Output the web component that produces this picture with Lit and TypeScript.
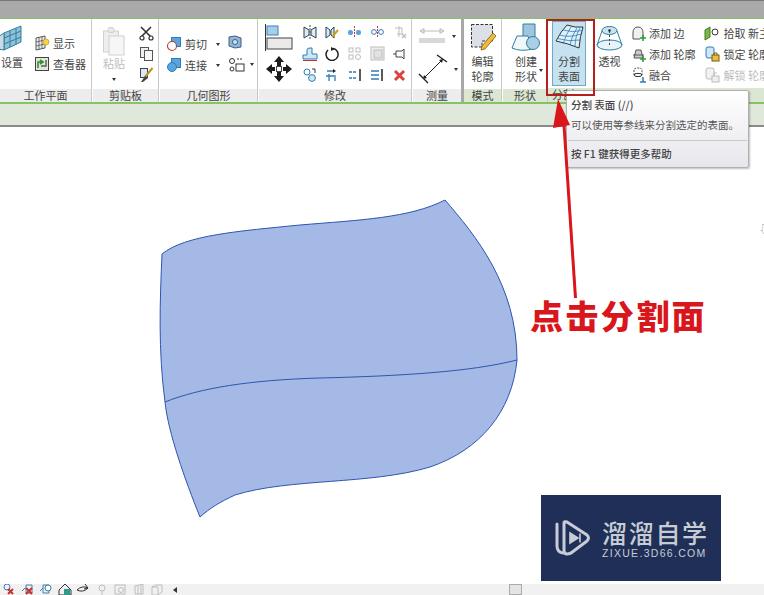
import { LitElement, html, css, svg } from "lit";
import { customElement } from "lit/decorators.js";

const ic = (w: number, h: number, body: unknown) =>
  html`<svg width=${w} height=${h} viewBox="0 0 ${w} ${h}" fill="none">${body}</svg>`;

const B = "#3f7fb5", GR = "#bdbdbd";

const arrowDrop = html`<span class="drop"></span>`;

const icons: Record<string, unknown> = {
  plane: ic(30, 28, svg`<path d="M7 8 L24 1 V17 L7 25Z" fill="#8fc0d8" stroke="#2f7f9f"/><path d="M13 6V22M19 3.5V19.5M7 13L24 6M7 19L24 12" stroke="#2f7f9f"/><path d="M7 8 L1 12 V24 L7 25Z" fill="#c7dce6" stroke="#3b7c95"/>`),
  show: ic(16, 16, svg`<path d="M2 3 L11 1 V13 L2 15Z" fill="#eee" stroke="#555"/><path d="M5 2.5V14M8 2V13.5M2 7L11 5M2 11L11 9" stroke="#555" stroke-width=".8"/><circle cx="12" cy="7" r="3" fill="#f4d34a" stroke="#c9a116" stroke-width=".7"/>`),
  viewer: ic(16, 16, svg`<rect x="1.5" y="1.5" width="13" height="13" fill="#dfe9d6" stroke="#444"/><path d="M4 12 V6 H9 M6 4 L9 6 L6 8" stroke="#3a8a3a" stroke-width="1.6"/><path d="M12 4 V10 H7" stroke="#5a5a5a" stroke-width="1.4"/>`),
  paste: ic(24, 30, svg`<rect x="1.5" y="5" width="15" height="21" fill="#eee" stroke="#d0d0d0"/><rect x="7" y="10" width="15" height="19" fill="#f6f6f6" stroke="#d0d0d0"/><rect x="6" y="1.5" width="6" height="5" rx="2" fill="#e8e8e8" stroke="#d0d0d0"/>`),
  cut: ic(15, 15, svg`<path d="M2 1 L12 11 M12 1 L2 11" stroke="#333" stroke-width="1.6"/><circle cx="3" cy="12" r="2" fill="#fff" stroke="#333" stroke-width="1.2"/><circle cx="12" cy="12" r="2" fill="#fff" stroke="#333" stroke-width="1.2"/>`),
  copy: ic(15, 16, svg`<rect x="1.5" y="1.5" width="8" height="10" fill="#eee" stroke="#555"/><rect x="5.5" y="4.5" width="8" height="10" fill="#f6f6f6" stroke="#555"/>`),
  brush: ic(15, 16, svg`<rect x="1.5" y="1.5" width="7" height="9" fill="#dfe8f0" stroke="#345"/><path d="M13.5 1 L6 10" stroke="#b8922a" stroke-width="2"/><path d="M6 9 L9 11 L4 15 H2Z" fill="#444"/>`),
  cutg: ic(16, 16, svg`<rect x="5.5" y="1.5" width="9" height="9" fill="#5aa5dc" stroke="#2f7cb8"/><circle cx="6" cy="10" r="4.5" fill="#fff" stroke="#c0392b" stroke-width="1.1"/>`),
  join: ic(16, 16, svg`<rect x="5.5" y="1.5" width="9" height="9" fill="#5aa5dc" stroke="#2f7cb8"/><circle cx="6" cy="10" r="4.5" fill="#5aa5dc" stroke="#2f7cb8"/>`),
  box: ic(14, 14, svg`<path d="M1 2 L7 1 L13 3 V12 L7 13 L1 11Z" fill="#8fb6d6" stroke="#3f5f7f"/><circle cx="7" cy="7" r="2.5" fill="#d5e6f2" stroke="#3f5f7f"/>`),
  geo: ic(18, 15, svg`<circle cx="4" cy="4" r="2.5" stroke="#333"/><circle cx="4" cy="12" r="2" stroke="#333"/><rect x="8" y="7" width="8" height="7" fill="#fff" stroke="#333"/><path d="M9 2 H14" stroke="#333" stroke-dasharray="2 1"/>`),
  align: ic(28, 27, svg`<path d="M0.5 0 V27" stroke="#333"/><rect x="2" y="2" width="11" height="9" fill="#a5cfe8" stroke="#3f7fb5"/><rect x="2" y="14" width="25" height="11" fill="#eaeaea" stroke="#444"/>`),
  move: ic(28, 28, svg`<path d="M14 1 L19 7 H16 V11 H12 V7 H9Z M14 27 L19 21 H16 V17 H12 V21 H9Z M1 14 L7 9 V12 H10 V16 H7 V19Z M27 14 L21 9 V12 H18 V16 H21 V19Z" fill="#1c1c1c"/><rect x="11.5" y="11.5" width="5" height="5" fill="#fff" stroke="#444"/>`),
  mirror1: ic(14, 14, svg`<path d="M1 2 L6 5 V10 L1 13Z" stroke="#245" fill="#dfeaf2"/><path d="M13 2 L8 5 V10 L13 13Z" stroke="#245" fill="#dfeaf2"/><path d="M7 0V14" stroke="#444" stroke-dasharray="2 1"/>`),
  mirror2: ic(14, 14, svg`<path d="M1 2 L5 5 V10 L1 13Z" stroke="#245" fill="#dfeaf2"/><path d="M9 2 L6 5 V10 L9 13Z" stroke="#245" fill="#dfeaf2"/><path d="M13 5 L7 12" stroke="#c9a116" stroke-width="2"/>`),
  splitA: ic(15, 12, svg`<rect x="1" y="4" width="5" height="5" rx="2" fill="#5aa5dc"/><rect x="9" y="4" width="5" height="5" rx="2" fill="#5aa5dc"/><path d="M7.5 0V12" stroke="#c0392b" stroke-dasharray="2 1"/>`),
  splitB: ic(15, 12, svg`<circle cx="4" cy="6" r="2.4" stroke="#2f7cb8" fill="#fff"/><circle cx="11" cy="6" r="2.4" stroke="#2f7cb8" fill="#fff"/><path d="M7.5 0V12" stroke="#c0392b" stroke-dasharray="2 1"/>`),
  unpin: ic(14, 14, svg`<path d="M2 3 H9 V9 H4M6 1 V12" stroke=${GR}/><path d="M9 9 L13 13 M13 9 L9 13" stroke=${GR} stroke-width="1.4"/>`),
  offset: ic(16, 14, svg`<path d="M1 12 V8 H5 V3 Q5 1 8 1 H10 V7 H15 V12Z" fill="#cfe6f5" stroke="#2f7cb8"/><path d="M1 13.5H15" stroke="#c0392b"/>`),
  rotate: ic(14, 14, svg`<path d="M8 1.5 A6 6 0 1 1 3 3" stroke="#222" stroke-width="1.5"/><path d="M6 0 L10 2 L6 4Z" fill="#222"/>`),
  arr1: ic(14, 14, svg`<rect x="1" y="1" width="4" height="4" stroke=${GR}/><rect x="8" y="1" width="4" height="4" stroke=${GR}/><rect x="1" y="8" width="4" height="4" stroke=${GR}/><circle cx="10" cy="10" r="2.5" stroke=${GR}/>`),
  scale: ic(15, 15, svg`<rect x="1" y="1" width="13" height="13" fill="#eee" stroke=${GR}/><rect x="4" y="4" width="8" height="8" fill="#e2e2e2" stroke=${GR}/>`),
  pin: ic(14, 12, svg`<path d="M3 3 H9 L11 1 V11 L9 9 H3Z M3 6 H0" stroke="#444" fill="#fff"/>`),
  link: ic(14, 14, svg`<circle cx="4" cy="4" r="3" stroke="#2f7cb8" fill="#fff"/><circle cx="9" cy="10" r="3.4" stroke="#2f7cb8" fill="#cfe6f5"/><path d="M9 1 H12 V5" stroke="#333"/>`),
  trim1: ic(14, 14, svg`<path d="M2 3 H8 M1 8 H9 M4 6 V13 M10 7 V13" stroke="#2f7cb8" stroke-width="1.3"/><path d="M8 1 L11 3 L8 5Z" fill="#222"/>`),
  trim2: ic(14, 14, svg`<path d="M1 4 H9 M1 10 H9" stroke="#2f7cb8" stroke-width="1.6" stroke-dasharray="3 1"/><path d="M12 1 V13" stroke="#333" stroke-width="1.6"/>`),
  trim3: ic(14, 14, svg`<path d="M1 3 H9 M1 7 H9 M1 11 H9" stroke="#2f7cb8" stroke-width="1.6"/><path d="M12 1 V13" stroke="#333" stroke-width="1.6"/>`),
  del: ic(13, 13, svg`<path d="M2 2 L11 11 M11 2 L2 11" stroke="#d9453d" stroke-width="3"/>`),
  dim1: ic(28, 18, svg`<path d="M2 4 H26 M2 4 L6 1.5 V6.5Z M26 4 L22 1.5 V6.5Z" stroke=${GR}/><rect x="1" y="11" width="26" height="5" fill="#d8d8d8"/>`),
  dim2: ic(30, 30, svg`<path d="M5 25 L25 5" stroke="#222"/><path d="M19 1 L29 8 M1 20 L10 29" stroke="#222" stroke-width="1.4"/><path d="M25 5 L21 6 L24 9Z M5 25 L9 24 L6 21Z" fill="#222"/>`),
  edit: ic(26, 28, svg`<path d="M1.5 1.5 H22.5 V18 H12 V24 H1.5Z" fill="#dde0e6" stroke="#333" stroke-dasharray="3 1.5"/><path d="M23 10 L12 23 L11 27 L15 26 L26 13Z" fill="#eebc3c" stroke="#7b5a0a" stroke-width=".8"/>`),
  shape: ic(30, 28, svg`<path d="M12 1 H24 V16 H12Z" fill="#9fc6de" stroke="#2f7f9f"/><path d="M6 13 H17 L21 26 Q10 29 1 25Z" fill="#f1f6f9" stroke="#2f7f9f"/><circle cx="22" cy="20" r="6.5" fill="#a9cfe4" stroke="#2f7f9f"/>`),
  divide: ic(29, 26, svg`<path d="M1 17 Q6 7 12 1 Q20 4 28 3 Q25 12 24 24 Q12 19 1 17Z" fill="#dff1fb" stroke="#333"/><path d="M4.5 11 Q15 14 26 10 M8 6 Q18 9 27 6.5 M2.5 14.5 Q14 18 25 16 M8 20 Q11 10 16 3 M15 21 Q17 11 22 4 M20 23 Q20 12 25 4" stroke="#2f7cb8" stroke-width=".8"/>`),
  xray: ic(27, 26, svg`<ellipse cx="13.5" cy="5.5" rx="7.5" ry="4" fill="#c7e2f2" stroke="#2f7f9f"/><path d="M6 6 L1 20 M21 6 L26 20" stroke="#2f7f9f"/><ellipse cx="13.5" cy="20" rx="12.5" ry="5" fill="#c7e2f2" fill-opacity=".4" stroke="#2f7f9f"/><path d="M13.5 6 V22" stroke="#444" stroke-dasharray="2 2"/><circle cx="13.5" cy="5.5" r="1.2" fill="#222"/>`),
  addEdge: ic(15, 15, svg`<path d="M2 13 V7 Q2 1 7 1 Q12 1 12 7 V13" stroke="#555" fill="#eef2f5"/><path d="M2 13 H9" stroke="#555"/><path d="M12 9 V15 M9 12 H15" stroke="#2f9a3c" stroke-width="1.6"/>`),
  addProf: ic(15, 15, svg`<path d="M3 11 L5 3 H10 L12 11Z" fill="#c9ced4" stroke="#555"/><path d="M2 8 H13" stroke="#555"/><path d="M12 9 V15 M9 12 H15" stroke="#2f9a3c" stroke-width="1.6"/>`),
  blend: ic(15, 16, svg`<path d="M3 8 V3 Q3 1 7 1 Q11 1 11 3 V8" stroke="#555" stroke-dasharray="2 1"/><ellipse cx="7" cy="8" rx="4" ry="1.6" stroke="#333"/><path d="M9 15 H15 M12 15 V10" stroke="#2f7cb8" stroke-width="1.5"/>`),
  pick: ic(16, 15, svg`<path d="M1 4 L6 1 V11 L1 14Z" fill="#7ab648" stroke="#3f7a1f"/><circle cx="11" cy="6" r="3" stroke="#333"/>`),
  lock: ic(16, 16, svg`<rect x="2" y="1" width="8" height="11" rx="2" fill="#cfe6f5" stroke="#2f7cb8"/><rect x="8" y="9" width="7" height="6" fill="#eebc3c" stroke="#7b5a0a"/><path d="M10 9 V7 H13 V9" stroke="#7b5a0a"/>`),
  unlock: ic(16, 16, svg`<rect x="2" y="1" width="8" height="11" rx="2" fill="#f2f2f2" stroke=${GR}/><rect x="8" y="9" width="7" height="6" fill="#eee" stroke=${GR}/><path d="M10 9 V6 H13" stroke=${GR}/>`),
};

const status = [
  svg`<circle cx="5" cy="4" r="3" stroke=${B}/><path d="M6 6 L11 11 M11 6 L6 11" stroke="#c8322b" stroke-width="2"/>`,
  svg`<path d="M1 8 L4 5 M5 2 H11 V10 H5Z" stroke=${B}/><path d="M5 5 L11 11 M11 5 L5 11" stroke="#c8322b" stroke-width="2"/>`,
  svg`<path d="M1 8 L4 5 M4 2 H10 V10 H4Z" stroke=${B}/><circle cx="9" cy="5" r="3" fill="#fff" stroke="#2f7f9f"/>`,
  svg`<path d="M1 7 L7 1 L13 7 V12 H1Z" stroke="#333"/><rect x="6" y="6" width="6" height="6" fill="#2f9a8a"/>`,
  svg`<path d="M1 7 Q6 2 12 5 Q7 10 1 7Z M9 1 L12 5 L8 6" stroke="#333"/>`,
  svg`<circle cx="7" cy="5" r="3" stroke=${GR}/><path d="M7 8 V12" stroke=${GR}/>`,
  svg`<rect x="2" y="2" width="10" height="9" stroke=${GR}/><circle cx="8" cy="7" r="2.5" stroke=${GR}/>`,
  svg`<path d="M3 3 L11 1 V11 H3Z M6 3 V11 M9 2 V11" stroke=${GR}/>`,
  svg`<path d="M2 4 L6 2 H12 V9 L8 12 H2Z M2 4 H8 V12" stroke=${GR}/>`,
];

@customElement("app-root")
export class AppRoot extends LitElement {
  static styles = css`
    :host { display: block; width: 764px; height: 595px; overflow: hidden; position: relative; background: #fff;
      font-family: "Noto Sans CJK SC", "Liberation Sans", sans-serif; font-size: 10px; color: #444; }
    svg { display: block; flex: none; }
    .app { display: flex; flex-direction: column; height: 595px; }
    .title { height: 17px; flex: none; background: #a9a9a9; border-top: 1px solid #777; border-bottom: 1px solid #86c463; }
    .ribbon { height: 83px; flex: none; display: flex; background: #fff; overflow: hidden; }
    .panel { display: flex; flex-direction: column; flex: none; border-right: 1px solid #c9c9c9; margin-right: 1px; }
    .body { height: 69px; display: flex; align-items: flex-start; overflow: hidden; }
    .label { height: 14px; line-height: 13px; text-align: center; background: #ededed; font-size: 11px; color: #444; white-space: nowrap; }
    .mode .label, .shape .label, .last .label { background: #dbe6d3; }
    .last .label { text-align: left; padding-left: 4px; }
    .p1 { width: 91px; } .p2 { width: 65px; } .p3 { width: 97px; } .p4 { width: 152px; } .p5 { width: 48px; margin-right: 0; border-right: 3px solid #a8a8a8; }
    .mode { width: 37px; } .shape { width: 44px; margin-right: 0; } .last { flex: 1; border-right: none; margin-right: 0; }
    .big { display: flex; flex-direction: column; align-items: center; line-height: 15px; font-size: 11px; flex: none; }
    .col { display: flex; flex-direction: column; flex: none; }
    .row { display: flex; align-items: center; gap: 3px; white-space: nowrap; font-size: 11px; }
    .drop { width: 0; height: 0; border: 2px solid transparent; border-top: 3px solid #333; border-bottom: 0; display: block; flex: none; }
    .muted { color: #bdbdbd; }
    .p1 .body { padding: 6px 0 0 0; gap: 7px; margin-left: -3px; }
    .p1 .big svg { margin-bottom: 2px; }
    .p1 .col { gap: 5px; margin-top: 10px; }
    .p2 .body { padding: 7px 0 0 9px; gap: 13px; }
    .p2 .big .drop { margin-top: 7px; }
    .p2 .col { gap: 5px; }
    .p3 .body { padding: 17px 0 0 6px; gap: 8px; }
    .p3 .col { gap: 5px; }
    .p3 .col.b { margin-top: -1px; gap: 8px; }
    .p3 .row { gap: 3px; width: 54px; }
    .p3 .row .drop { margin-left: 6px; }
    .p3 .b .row { width: auto; gap: 4px; }
    .p3 .b .row .drop { margin-left: 0; }
    .p4 .body { padding: 5px 0 0 6px; gap: 9px; }
    .p4 .col { gap: 4px; flex: none; }
    .grid { display: grid; grid-template-columns: repeat(5, 15px); column-gap: 7.5px; row-gap: 7px; padding-top: 1px; justify-items: center; align-items: center; }
    .p5 .body { padding: 8px 0 0 5px; }
    .p5 .col { gap: 9px; }
    .p5 .row { gap: 6px; }
    .mode .body { justify-content: center; padding-top: 4px; }
    .shape .body { justify-content: center; padding-top: 4px; gap: 0; position: relative; }
    .shape .big svg, .mode .big svg { margin-bottom: 3px; }
    .shape .drop { position: absolute; right: 4px; top: 50px; }
    .shape .big { margin-left: 2px; }
    .last .body { gap: 8px; }
    .divide { margin: 2px 0 0 4px; width: 34px; height: 65px; box-sizing: border-box; background: #c6e1f0; border: 1px solid #6fa9c6; padding-top: 2px; }
    .divide svg { margin-bottom: 4px; }
    .xray { margin-left: 2px; padding-top: 6px; }
    .xray svg { margin-bottom: 3px; }
    .tri { padding-top: 6px; gap: 5px; }
    .tri.two { margin-left: 1px; }
    .band { height: 25px; flex: none; box-sizing: border-box; background: #dfe8da; border-top: 2px solid #86c463; border-bottom: 2px solid #8a8a8a; }
    .canvas { flex: 1; position: relative; background: #fff; overflow: hidden; }
    .canvas > svg { position: absolute; left: 0; top: 0; }
    .callout { position: absolute; left: 530px; top: 168px; font-size: 33px; line-height: 40px; font-weight: 900; color: #d9161b; letter-spacing: 2.4px; white-space: nowrap; }
    .logo { position: absolute; left: 541px; top: 368px; width: 180px; height: 86px; background: #1f2f58; color: #c8ccd4; display: flex; align-items: center; gap: 11px; padding: 2px 0 0 14px; box-sizing: border-box; }
    .brand { font-size: 25px; line-height: 28px; font-weight: 500; letter-spacing: 1.7px; white-space: nowrap; }
    .site { font-family: "Liberation Sans", sans-serif; font-size: 10.5px; line-height: 13px; letter-spacing: 1.3px; margin-top: 1px; white-space: nowrap; }
    .status { height: 11px; flex: none; background: #f1f1f1; display: flex; align-items: center; position: relative; overflow: hidden; padding-left: 2px; gap: 4.5px; }
    .thumb { position: absolute; left: 509px; top: 0; width: 13px; height: 11px; background: #e4e4e4; border: 1px solid #aaa; box-sizing: border-box; }
    .left { width: 0; height: 0; border: 3px solid transparent; border-right: 4px solid #333; margin-left: 1px; }
    .tip { position: absolute; left: 566px; top: 90px; width: 183px; height: 78px; box-sizing: border-box; background: linear-gradient(#fff, #e6e6ec); border: 1px solid #b0b0b0; border-radius: 2px; box-shadow: 1px 1px 2px rgba(0,0,0,.25); padding: 6px 4px 0 4px; color: #444; font-size: 10.5px; }
    .tip b { display: block; line-height: 16px; font-weight: 500; }
    .tip p { margin: 4px 0 0; line-height: 15px; color: #555; white-space: nowrap; }
    .tip hr { border: none; border-top: 1px solid #c8c8c8; margin: 8px -3px 6px; }
    .tip div { line-height: 14px; font-weight: 500; }
    .overlay { position: absolute; left: 0; top: 0; pointer-events: none; }
    .mark { position: absolute; left: 759px; top: 96px; font-size: 10px; color: #999; line-height: 12px; }
  `;

  render() {
    return html`
      <div class="app">
        <div class="title"></div>
        <div class="ribbon">
          <div class="panel p1">
            <div class="body">
              <div class="big">${icons.plane}<span>设置</span></div>
              <div class="col">
                <div class="row">${icons.show}<span>显示</span></div>
                <div class="row">${icons.viewer}<span>查看器</span></div>
              </div>
            </div>
            <div class="label">工作平面</div>
          </div>
          <div class="panel p2">
            <div class="body">
              <div class="big muted">${icons.paste}<span>粘贴</span>${arrowDrop}</div>
              <div class="col">${icons.cut}${icons.copy}${icons.brush}</div>
            </div>
            <div class="label">剪贴板</div>
          </div>
          <div class="panel p3">
            <div class="body">
              <div class="col">
                <div class="row">${icons.cutg}<span>剪切</span>${arrowDrop}</div>
                <div class="row">${icons.join}<span>连接</span>${arrowDrop}</div>
              </div>
              <div class="col b">
                <div class="row">${icons.box}</div>
                <div class="row">${icons.geo}${arrowDrop}</div>
              </div>
            </div>
            <div class="label">几何图形</div>
          </div>
          <div class="panel p4">
            <div class="body">
              <div class="col">${icons.align}${icons.move}</div>
              <div class="grid">
                ${["mirror1","mirror2","splitA","splitB","unpin","offset","rotate","arr1","scale","pin","link","trim1","trim2","trim3","del"].map((k) => icons[k])}
              </div>
            </div>
            <div class="label">修改</div>
          </div>
          <div class="panel p5">
            <div class="body">
              <div class="col">
                <div class="row">${icons.dim1}${arrowDrop}</div>
                <div class="row">${icons.dim2}${arrowDrop}</div>
              </div>
            </div>
            <div class="label">测量</div>
          </div>
          <div class="panel mode">
            <div class="body"><div class="big">${icons.edit}<span>编辑</span><span>轮廓</span></div></div>
            <div class="label">模式</div>
          </div>
          <div class="panel shape">
            <div class="body"><div class="big">${icons.shape}<span>创建</span><span>形状</span></div>${arrowDrop}</div>
            <div class="label">形状</div>
          </div>
          <div class="panel last">
            <div class="body">
              <div class="big divide">${icons.divide}<span>分割</span><span>表面</span></div>
              <div class="big xray">${icons.xray}<span>透视</span></div>
              <div class="col tri">
                <div class="row">${icons.addEdge}<span>添加 边</span></div>
                <div class="row">${icons.addProf}<span>添加 轮廓</span></div>
                <div class="row">${icons.blend}<span>融合</span></div>
              </div>
              <div class="col tri two">
                <div class="row">${icons.pick}<span>拾取 新主体</span></div>
                <div class="row">${icons.lock}<span>锁定 轮廓</span></div>
                <div class="row muted">${icons.unlock}<span>解锁 轮廓</span></div>
              </div>
            </div>
            <div class="label">分割</div>
          </div>
        </div>
        <div class="band"></div>
        <div class="canvas">
          <svg width="764" height="457" viewBox="0 127 764 457">
            <path d="M162 254 C185 235 240 231 300 225 C360 220 410 218 445 200 C475 235 517 285 517 360 C512 412 480 450 430 467 C370 485 290 478 235 495 C220 502 210 508 200 517 C185 480 168 432 165 402 C158 350 160 300 162 254Z" fill="#a4b9e6" stroke="#2d56ae"/>
            <path d="M165 402 C200 388 250 380 320 378 C400 376 470 372 517 360" fill="none" stroke="#2d56ae"/>
          </svg>
          <div class="mark">⇩</div>
          <div class="callout">点击分割面</div>
          <div class="logo">
            <svg width="36" height="38" viewBox="0 0 36 38" fill="none">
              <path d="M2 4 V26 Q2 32 8 33" stroke="#c8ccd4" stroke-width="3" stroke-linecap="round"/>
              <path d="M9 3 Q9 1 12 2 L32 15 Q35 18 32 21 L16 33 Q9 36 9 30Z" stroke="#c8ccd4" stroke-width="3" stroke-linejoin="round"/>
              <path d="M15 13 L23 18 L15 23Z M25 13.5 V22.5" stroke="#c8ccd4" stroke-width="1.6" fill="#c8ccd4"/>
            </svg>
            <div>
              <div class="brand">溜溜自学</div>
              <div class="site">ZIXUE.3D66.COM</div>
            </div>
          </div>
        </div>
        <div class="status">
          ${status.map((s) => html`<svg width="14" height="13" viewBox="0 0 14 13" fill="none">${s}</svg>`)}
          <span class="left"></span>
          <div class="thumb"></div>
        </div>
      </div>
      <div class="tip">
        <b>分割 表面 (//)</b>
        <p>可以使用等参线来分割选定的表面。</p>
        <hr />
        <div>按 F1 键获得更多帮助</div>
      </div>
      <svg class="overlay" width="764" height="595" viewBox="0 0 764 595" fill="none">
        <rect x="547" y="20" width="47" height="75" stroke="#b3201f" stroke-width="2"/>
        <path d="M575.5 298 L564 125" stroke="#d9161b" stroke-width="3"/>
        <path d="M558 99 L553 128 L570 125Z" fill="#d9161b"/>
      </svg>
    `;
  }
}
